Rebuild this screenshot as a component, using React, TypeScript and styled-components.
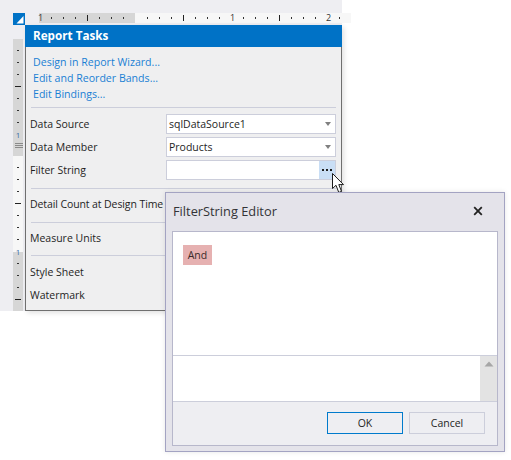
import styled, { createGlobalStyle } from 'styled-components';

const GlobalStyle = createGlobalStyle`
  * {
    box-sizing: border-box;
  }
  html, body {
    margin: 0;
    padding: 0;
    background: #ffffff;
  }
  body {
    font-family: "Open Sans", "Liberation Sans", sans-serif;
  }
`;

const TOP_TICKS = ['1', '.', '.', '.', '|', '.', '.', '.', '', '.', '.', '.', '|', '.', '.', '.', '1', '.', '.', '.', '|', '.', '.', '.', '2', '.'];
const LEFT_TICKS = ['.', '.', '.', '-', '.', '.', '.', '1', 'h', '.', '.', '.', '-', '.', '.', '.', '1', '.', '.', '.', '-'];

const TopTick = ({ mark }: { mark: string }) => {
  if (mark === '.') return <Style.Dot />;
  if (mark === '|') return <Style.Bar />;
  if (mark === '') return <Style.Blank />;
  return <Style.Digit>{mark}</Style.Digit>;
};

const LeftTick = ({ mark }: { mark: string }) => {
  if (mark === 'h') {
    return (
      <Style.Handle>
        <i />
        <i />
        <i />
      </Style.Handle>
    );
  }
  return (
    <Style.LeftCell>
      {mark === '1' && '1'}
      {mark === '-' && <Style.LongDash />}
      {mark === '.' && <Style.ShortDash />}
    </Style.LeftCell>
  );
};

export default function App() {
  return (
    <Style.Page>
      <GlobalStyle />
      <Style.Designer>
        <Style.RulerRow>
          <Style.Corner>
            <svg width="12" height="12" viewBox="0 0 12 12">
              <path d="M3.5 10.5 L10.5 10.5 L10.5 3 Z" fill="#ffffff" />
            </svg>
          </Style.Corner>
          <Style.TopRuler>
            {TOP_TICKS.map((mark, i) => (
              <TopTick key={i} mark={mark} />
            ))}
          </Style.TopRuler>
        </Style.RulerRow>
        <Style.Body>
          <Style.LeftRuler>
            {LEFT_TICKS.map((mark, i) => (
              <LeftTick key={i} mark={mark} />
            ))}
          </Style.LeftRuler>
          <Style.Panel>
            <Style.PanelHeader>Report Tasks</Style.PanelHeader>
            <Style.Links>
              <Style.LinkItem>Design in Report Wizard...</Style.LinkItem>
              <Style.LinkItem>Edit and Reorder Bands...</Style.LinkItem>
              <Style.LinkItem>Edit Bindings...</Style.LinkItem>
            </Style.Links>
            <Style.Divider />
            <Style.Rows $tail={8}>
              <Style.Row>
                <Style.Label>Data Source</Style.Label>
                <Style.Field>
                  <Style.FieldText>sqlDataSource1</Style.FieldText>
                  <Style.ComboArrow />
                </Style.Field>
              </Style.Row>
              <Style.Row>
                <Style.Label>Data Member</Style.Label>
                <Style.Field>
                  <Style.FieldText>Products</Style.FieldText>
                  <Style.ComboArrow />
                </Style.Field>
              </Style.Row>
              <Style.Row>
                <Style.Label>Filter String</Style.Label>
                <Style.Field>
                  <Style.FieldText />
                  <Style.Ellipsis>
                    <svg width="10" height="2" viewBox="0 0 10 2">
                      <rect x="0" y="0" width="2" height="2" fill="#1e1e1e" />
                      <rect x="4" y="0" width="2" height="2" fill="#1e1e1e" />
                      <rect x="8" y="0" width="2" height="2" fill="#1e1e1e" />
                    </svg>
                  </Style.Ellipsis>
                </Style.Field>
              </Style.Row>
            </Style.Rows>
            <Style.Divider />
            <Style.SingleRow $tail={8}>
              <Style.Label $tight>Detail Count at Design Time</Style.Label>
            </Style.SingleRow>
            <Style.Divider />
            <Style.SingleRow $tail={7}>
              <Style.Label>Measure Units</Style.Label>
            </Style.SingleRow>
            <Style.Divider />
            <Style.Rows $tail={5}>
              <Style.Row>
                <Style.Label>Style Sheet</Style.Label>
              </Style.Row>
              <Style.Row>
                <Style.Label>Watermark</Style.Label>
              </Style.Row>
            </Style.Rows>
          </Style.Panel>
        </Style.Body>
      </Style.Designer>

      <Style.Cursor width="14" height="21" viewBox="0 0 14 21">
        <path
          d="M0.5 0.5 L0.5 15.5 L4 12.3 L6.8 19.5 L9.5 18.3 L6.8 11.6 L11.5 11.6 Z"
          fill="#ffffff"
          stroke="#1b1b1b"
          strokeWidth="1"
        />
      </Style.Cursor>

      <Style.Dialog>
        <Style.DialogTitle>
          <span>FilterString Editor</span>
          <svg width="10" height="10" viewBox="0 0 10 10">
            <path d="M1.2 1.2 L8.8 8.8 M8.8 1.2 L1.2 8.8" stroke="#222222" strokeWidth="1.8" />
          </svg>
        </Style.DialogTitle>
        <Style.DialogInner>
          <Style.FilterArea>
            <Style.AndChip>And</Style.AndChip>
          </Style.FilterArea>
          <Style.TextArea>
            <Style.ScrollBar>
              <svg width="10" height="6" viewBox="0 0 10 6">
                <path d="M5 0.5 L9.5 5.5 L0.5 5.5 Z" fill="#a6a6a6" />
              </svg>
            </Style.ScrollBar>
          </Style.TextArea>
          <Style.Footer>
            <Style.Button $primary>OK</Style.Button>
            <Style.Button>Cancel</Style.Button>
          </Style.Footer>
        </Style.DialogInner>
      </Style.Dialog>
    </Style.Page>
  );
}

const Style = {
  Page: styled.div`
    position: relative;
    width: 511px;
    height: 460px;
    overflow: hidden;
    background: #ffffff;
  `,
  Designer: styled.div`
    width: 342px;
    height: 311px;
    padding-top: 13px;
    background: #eeeef2;
  `,
  RulerRow: styled.div`
    display: flex;
    height: 12px;
    padding-left: 13px;
  `,
  Corner: styled.div`
    display: flex;
    width: 12px;
    height: 12px;
    background: #0072c6;
  `,
  TopRuler: styled.div`
    display: flex;
    align-items: center;
    flex: 1;
    height: 10px;
    margin-left: 14px;
    background: linear-gradient(to right, #d6d6d6 96px, #f7f7f7 96px);
  `,
  Dot: styled.i`
    display: block;
    width: 12px;
    height: 2px;
    background: linear-gradient(#333, #333) left center / 1px 2px no-repeat;
  `,
  Bar: styled.i`
    display: block;
    width: 12px;
    height: 6px;
    background: linear-gradient(#222, #222) left center / 1px 6px no-repeat;
  `,
  Blank: styled.i`
    display: block;
    width: 12px;
  `,
  Digit: styled.span`
    width: 12px;
    font-size: 9px;
    line-height: 10px;
    text-indent: -1px;
    color: #333;
  `,
  Body: styled.div`
    display: flex;
    padding-left: 13px;
  `,
  LeftRuler: styled.div`
    width: 10px;
    height: 272px;
    margin-top: 14px;
    padding-top: 5px;
    background: linear-gradient(
      #d6d6d6 0 117px,
      #f7f7f7 117px 213px,
      #d6d6d6 213px
    );
  `,
  LeftCell: styled.div`
    display: flex;
    align-items: center;
    justify-content: center;
    height: 12px;
    font-size: 8px;
    color: #3a6ea5;
  `,
  Handle: styled.div`
    display: flex;
    flex-direction: column;
    align-items: flex-end;
    gap: 1px;
    height: 21px;
    padding-top: 3px;

    i {
      display: block;
      width: 8px;
      height: 1px;
      background: #8a8a8a;
    }
  `,
  LongDash: styled.i`
    display: block;
    width: 6px;
    height: 1px;
    background: #222;
  `,
  ShortDash: styled.i`
    display: block;
    width: 2px;
    height: 1px;
    background: #333;
  `,
  Panel: styled.div`
    width: 317px;
    height: 286px;
    margin-left: 2px;
    background: #efeff0;
    border: 1px solid #6f6f6f;
    border-top: 0;
    box-shadow: 2px 2px 5px rgba(0, 0, 0, 0.12);
  `,
  PanelHeader: styled.div`
    height: 22px;
    margin: 0 -1px;
    padding-left: 8px;
    font-size: 11.7px;
    font-weight: 700;
    line-height: 21px;
    color: #ffffff;
    background: #0072c6;
  `,
  Links: styled.div`
    display: flex;
    flex-direction: column;
    padding: 7px 0 5px 7px;
  `,
  LinkItem: styled.div`
    height: 16px;
    font-size: 10.6px;
    line-height: 16px;
    color: #1a7fd4;
  `,
  Divider: styled.div`
    height: 1px;
    margin: 0 5px;
    background: #cccedb;
  `,
  Rows: styled.div<{ $tail: number }>`
    display: flex;
    flex-direction: column;
    gap: 3px;
    padding: 6px 5px ${(p) => p.$tail}px 4px;
  `,
  Row: styled.div`
    display: flex;
    justify-content: space-between;
    align-items: center;
    height: 20px;
  `,
  SingleRow: styled.div<{ $tail: number }>`
    display: flex;
    align-items: center;
    height: ${(p) => 25 + p.$tail}px;
    padding: 5px 5px ${(p) => p.$tail}px 4px;
  `,
  Label: styled.span<{ $tight?: boolean }>`
    font-size: 10.5px;
    letter-spacing: ${(p) => (p.$tight ? '-0.1px' : '0')};
    color: #1e1e1e;
    white-space: nowrap;
  `,
  Field: styled.div`
    display: flex;
    align-items: center;
    width: 170px;
    height: 20px;
    background: #ffffff;
    border: 1px solid #cccedb;
  `,
  FieldText: styled.span`
    flex: 1;
    padding-left: 2px;
    font-size: 10.5px;
    color: #1e1e1e;
  `,
  ComboArrow: styled.i`
    width: 0;
    height: 0;
    margin-right: 4px;
    border-left: 3.5px solid transparent;
    border-right: 3.5px solid transparent;
    border-top: 4px solid #808080;
  `,
  Ellipsis: styled.div`
    display: flex;
    align-items: center;
    justify-content: center;
    width: 16px;
    height: 18px;
    background: #c9def5;
  `,
  Cursor: styled.svg`
    position: absolute;
    top: 173px;
    left: 332px;
  `,
  Dialog: styled.div`
    position: absolute;
    top: 192px;
    left: 165px;
    display: flex;
    flex-direction: column;
    width: 340px;
    height: 260px;
    padding: 0 6px 5px;
    background: #e4e3ea;
    border: 1px solid #a3a3c2;
    box-shadow: 0 0 5px rgba(0, 0, 0, 0.1);
  `,
  DialogTitle: styled.div`
    display: flex;
    align-items: center;
    justify-content: space-between;
    height: 38px;
    padding: 0 15px 2px 1px;
    font-size: 12.8px;
    color: #333337;
    flex-shrink: 0;
  `,
  DialogInner: styled.div`
    display: flex;
    flex-direction: column;
    flex: 1;
    background: #eeeef2;
    border: 1px solid #b7b7cb;
  `,
  FilterArea: styled.div`
    height: 124px;
    padding: 10px;
    background: #ffffff;
    border-bottom: 1px solid #cccedb;
  `,
  AndChip: styled.span`
    display: inline-block;
    width: 29px;
    font-size: 10.5px;
    line-height: 20px;
    text-align: center;
    color: #3b2a2a;
    background: #e6b1b1;
  `,
  TextArea: styled.div`
    display: flex;
    justify-content: flex-end;
    height: 46px;
    background: #ffffff;
    border-bottom: 1px solid #cccedb;
  `,
  ScrollBar: styled.div`
    display: flex;
    justify-content: center;
    width: 17px;
    padding-top: 5px;
    background: #e3e3e3;
  `,
  Footer: styled.div`
    display: flex;
    justify-content: flex-end;
    gap: 6px;
    padding: 10px 12px 0;
  `,
  Button: styled.div<{ $primary?: boolean }>`
    display: flex;
    align-items: center;
    justify-content: center;
    width: 76px;
    height: 22px;
    font-size: 10.5px;
    color: #1e1e1e;
    border: 1px solid ${(p) => (p.$primary ? '#007acc' : '#cccedb')};
  `,
};
